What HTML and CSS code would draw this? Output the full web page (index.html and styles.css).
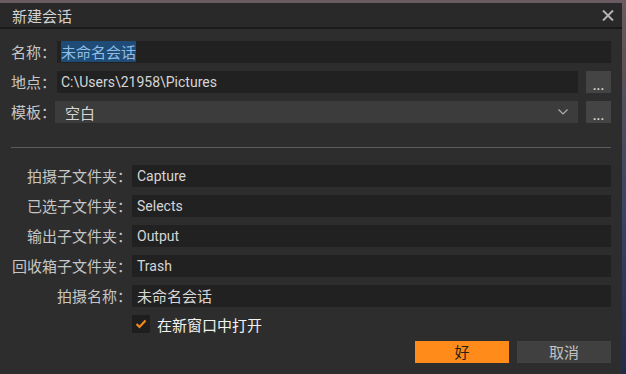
FILE: index.html
```html
<!DOCTYPE html>
<html lang="zh-CN">
<head>
  <meta charset="UTF-8">
  <title>新建会话</title>
  <link rel="stylesheet" href="styles.css">
</head>
<body>

<div class="dialog">
  <div class="titlebar">
    <span class="title">新建会话</span>
    <svg class="close" width="12" height="11" viewBox="0 0 12 11">
      <path d="M1 0.5 L11 10.5 M11 0.5 L1 10.5" stroke="#b4b4b4" stroke-width="2" fill="none"/>
    </svg>
  </div>

  <div class="content">
    <div class="top-grid">
      <label class="label">名称：</label>
      <div class="field wide cjk"><span class="selected">未命名会话</span></div>

      <label class="label">地点：</label>
      <div class="field">C:\Users\21958\Pictures</div>
      <button class="browse">...</button>

      <label class="label">模板：</label>
      <div class="select">
        <span>空白</span>
        <svg width="10" height="6" viewBox="0 0 10 6">
          <path d="M0.5 0.5 L5 5 L9.5 0.5" stroke="#b0b0b0" stroke-width="1.2" fill="none"/>
        </svg>
      </div>
      <button class="browse">...</button>
    </div>

    <div class="separator"></div>

    <div class="sub-grid">
      <label class="label">拍摄子文件夹：</label>
      <div class="field">Capture</div>

      <label class="label">已选子文件夹：</label>
      <div class="field">Selects</div>

      <label class="label">输出子文件夹：</label>
      <div class="field">Output</div>

      <label class="label">回收箱子文件夹：</label>
      <div class="field">Trash</div>

      <label class="label">拍摄名称：</label>
      <div class="field cjk">未命名会话</div>

      <span></span>
      <div class="check-row">
        <span class="checkbox">
          <svg width="12" height="10" viewBox="0 0 12 10">
            <path d="M1.5 5 L4.5 8 L10.5 1.5" stroke="#f08a1c" stroke-width="2.2" fill="none"/>
          </svg>
        </span>
        <span class="check-text">在新窗口中打开</span>
      </div>
    </div>

    <div class="actions">
      <button class="btn ok">好</button>
      <button class="btn cancel">取消</button>
    </div>
  </div>
</div>

</body>
</html>
```

FILE: styles.css
```css
body {
  margin: 0;
  padding: 3px 4px 0 0;
  width: 626px;
  height: 374px;
  box-sizing: border-box;
  overflow: hidden;
  background: linear-gradient(180deg, #6a5a62 0%, #5a5058 20%, #3a4464 55%, #22294a 100%);
  font-family: "Noto Sans CJK SC", sans-serif;
}

.dialog {
  width: 622px;
  height: 371px;
  background: #2d2d2d;
  color: #c6c6c6;
}

.titlebar {
  height: 24px;
  background: #292929;
  border-bottom: 2px solid #1a1a1a;
  display: flex;
  align-items: center;
  justify-content: space-between;
  padding: 0 8px 0 12px;
}

.title {
  font-size: 15px;
  color: #d2d2d2;
}

.content {
  padding: 12px 11px 0 11px;
}

.label {
  font-size: 15px;
  line-height: 22px;
  color: #c6c6c6;
  white-space: nowrap;
}

.top-grid {
  display: grid;
  grid-template-columns: 38px 1fr 25px;
  column-gap: 8px;
  row-gap: 8px;
}

.field {
  height: 22px;
  background: #212121;
  padding: 0 5px;
  font-family: Roboto, "Noto Sans CJK SC", sans-serif;
  font-size: 14px;
  line-height: 22px;
  color: #d6d6d6;
  white-space: nowrap;
}

.field.cjk {
  font-family: "Noto Sans CJK SC", sans-serif;
  font-size: 15px;
}

.top-grid .field {
  padding-left: 4px;
}

.field.wide {
  grid-column: 2 / 4;
}

.selected {
  background: #1f4c76;
  color: #8fbde6;
}

.select {
  height: 22px;
  background: #3c3c3c;
  margin-left: -2px;
  padding: 0 10px;
  display: flex;
  align-items: center;
  justify-content: space-between;
  font-size: 15px;
  color: #d6d6d6;
}

.browse {
  height: 22px;
  border: none;
  background: #444444;
  color: #d4d4d4;
  font-family: Roboto, sans-serif;
  font-size: 13px;
  font-weight: bold;
  line-height: 30px;
  padding: 0;
}

.separator {
  height: 1px;
  background: #5c5c5c;
  margin: 24px 0 17px;
}

.sub-grid {
  display: grid;
  grid-template-columns: 110px 1fr;
  column-gap: 11px;
  row-gap: 8px;
}

.sub-grid .label {
  text-align: right;
  margin-right: -11px;
}

.check-row {
  display: flex;
  align-items: center;
  gap: 7px;
  height: 18px;
}

.checkbox {
  width: 18px;
  height: 18px;
  background: #1e1e1e;
  display: flex;
  align-items: center;
  justify-content: center;
}

.check-text {
  font-size: 15px;
  color: #f2f2f2;
}

.actions {
  display: flex;
  justify-content: flex-end;
  gap: 8px;
  margin-top: 8px;
}

.btn {
  width: 94px;
  height: 22px;
  border: none;
  padding: 0;
  font-family: "Noto Sans CJK SC", sans-serif;
  font-size: 15px;
  line-height: 22px;
}

.btn.ok {
  background: #ff8c1a;
  color: #2a2116;
}

.btn.cancel {
  background: #404040;
  color: #c2c2c2;
}
```
